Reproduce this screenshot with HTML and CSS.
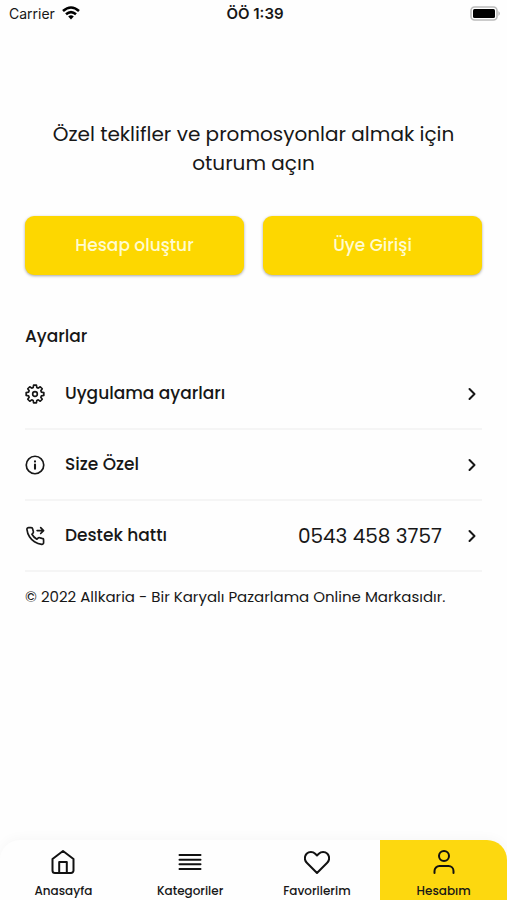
FILE: index.html
```html
<!DOCTYPE html>
<html lang="tr">
<head>
<meta charset="utf-8">
<meta name="viewport" content="width=device-width, initial-scale=1">
<title>Hesabım</title>
<link rel="stylesheet" href="styles.css">
</head>
<body>
<header class="status">
  <span class="status-carrier">Carrier
    <svg width="18" height="14" viewBox="0 0 18 14" fill="none" stroke="#000" stroke-width="2.6" aria-hidden="true"><path d="M1 5Q9-2 17 5M4 8.3Q9 4 14 8.3"/><path d="M6.2 10.4Q9 8.2 11.8 10.4L9 13.4Z" fill="#000" stroke="none"/></svg>
  </span>
  <strong class="status-time">ÖÖ 1:39</strong>
  <svg class="battery" width="31" height="15" viewBox="0 0 31 15" aria-hidden="true"><rect x="1" y="1" width="26" height="13" rx="3.5" fill="#fff" stroke="#bbb" stroke-width="1.6"/><rect x="3" y="3" width="22" height="9" rx="1.5"/><path d="M28.500 5Q31 7.500 28.500 10Z" fill="#aaa"/></svg>
</header>
<main class="account">
  <h1 class="prompt">Özel teklifler ve promosyonlar almak için oturum açın</h1>
  <div class="actions">
    <button class="action" type="button">Hesap oluştur</button>
    <button class="action" type="button">Üye Girişi</button>
  </div>
  <h2 class="section-title">Ayarlar</h2>
  <nav class="settings" aria-label="Ayarlar">
    <a class="row" href="#ayarlar">
      <svg class="row-icon" viewBox="-12 -12 24 24"><path d="M10.600 1.700 7.700 2.200 7 3.900 8.700 6.300 6.300 8.700 3.900 7 2.200 7.700 1.700 10.600H-1.700L-2.200 7.700-3.900 7-6.300 8.700-8.700 6.300-7 3.900-7.700 2.200-10.600 1.700V-1.700L-7.700-2.200-7-3.900-8.700-6.300-6.300-8.700-3.900-7-2.200-7.700-1.700-10.600H1.700L2.200-7.700 3.900-7 6.300-8.700 8.700-6.300 7-3.900 7.700-2.200 10.600-1.700Z"/><circle r="2.800"/></svg>
      <span class="row-label">Uygulama ayarları</span>
      <svg class="chevron" viewBox="0 0 12 16"><path d="M3.500 3l5 5-5 5"/></svg>
    </a>
    <a class="row" href="#size-ozel">
      <svg class="row-icon" viewBox="0 0 24 24"><circle cx="12" cy="12" r="10.500"/><path d="M12 11.500v5M12 7.500v.4" stroke-width="2.500"/></svg>
      <span class="row-label">Size Özel</span>
      <svg class="chevron" viewBox="0 0 12 16"><path d="M3.500 3l5 5-5 5"/></svg>
    </a>
    <a class="row" href="tel:05434583757">
      <svg class="row-icon" viewBox="0 0 24 24"><path d="M14.500 5.500H22M18.800 2l3.500 3.500L18.800 9M22.300 17v3a2 2 0 0 1-2.200 2 20 20 0 0 1-8.700-3.100 19.500 19.500 0 0 1-6-6A20 20 0 0 1 2.300 4.100 2 2 0 0 1 4.300 2h3a2 2 0 0 1 2 1.700c.13 1 .36 1.900.7 2.800a2 2 0 0 1-.45 2.100L8.300 9.900a16 16 0 0 0 6 6l1.300-1.300a2 2 0 0 1 2.100-.45c.9.340 1.800.57 2.800.7a2 2 0 0 1 1.800 2.150z"/></svg>
      <span class="row-label">Destek hattı</span>
      <span class="row-value">0543 458 3757</span>
      <svg class="chevron" viewBox="0 0 12 16"><path d="M3.500 3l5 5-5 5"/></svg>
    </a>
  </nav>
  <p class="copyright">© 2022 Allkaria - Bir Karyalı Pazarlama Online Markasıdır.</p>
</main>
<nav class="tabs" aria-label="Menü">
  <a class="tab" href="#anasayfa">
    <svg class="tab-icon" viewBox="0 0 26 26"><path d="M2.500 10 13 2l10.500 8v11.500a2.500 2.500 0 0 1-2.500 2.500H5a2.500 2.500 0 0 1-2.500-2.500zM9.200 24V13h7.600v11"/></svg>
    Anasayfa
  </a>
  <a class="tab" href="#kategoriler">
    <svg class="tab-icon" viewBox="0 0 26 26"><path d="M2.500 6h21M2.500 10.700h21M2.500 15.300h21M2.500 20h21"/></svg>
    Kategoriler
  </a>
  <a class="tab" href="#favorilerim">
    <svg class="tab-icon" viewBox="0 0 26 26"><path d="M13 24 2.800 13.800C.3 11.300.2 7.300 2.600 4.800 5 2.500 8.800 2.500 11.200 4.800L13 6.500l1.800-1.700c2.400-2.300 6.200-2.300 8.600 0 2.400 2.500 2.300 6.500-.2 9z"/></svg>
    Favorilerim
  </a>
  <a class="tab tab-active" href="#hesabim" aria-current="page">
    <svg class="tab-icon" viewBox="0 0 26 26"><circle cx="13" cy="7" r="5"/><path d="M3.500 24v-2a5 5 0 0 1 5-5h9a5 5 0 0 1 5 5v2"/></svg>
    Hesabım
  </a>
</nav>
</body>
</html>
```
FILE: styles.css
```css
* {
  box-sizing: border-box;
}

body {
  display: flex;
  flex-direction: column;
  min-height: 100vh;
  margin: 0;
  background: #fefefe;
  color: #171717;
  font-family: Poppins, Inter, "Open Sans", sans-serif;
}

a {
  color: inherit;
  text-decoration: none;
}

svg {
  flex: none;
}

.status {
  display: grid;
  grid-template-columns: 1fr auto 1fr;
  align-items: center;
  height: 26px;
  padding: 0 6px 0 9px;
  font-family: Inter, sans-serif;
  font-size: 14px;
}

.status-carrier {
  display: flex;
  align-items: center;
  gap: 7px;
}

.status-time {
  font-size: 15px;
  font-weight: 600;
}

.battery {
  justify-self: end;
}

.account {
  flex: 1;
  padding: 94px 25px 24px;
}

.prompt {
  max-width: 420px;
  margin: 0 auto;
  font-size: 20px;
  font-weight: 400;
  line-height: 29px;
  text-align: center;
}

.actions {
  display: grid;
  grid-template-columns: 1fr 1fr;
  gap: 19px;
  margin-top: 38px;
}

.action {
  height: 59px;
  padding: 0 0 2px;
  border: 0;
  border-radius: 9px;
  background: #fdd700;
  box-shadow: 0 1px 3px rgba(0, 0, 0, 0.35);
  color: #fffbd0;
  font-family: inherit;
  font-size: 17px;
  font-weight: 500;
}

.section-title {
  margin: 48px 0 10px;
  font-size: 17px;
  font-weight: 500;
  line-height: 26px;
}

.row {
  display: flex;
  align-items: center;
  height: 71px;
  border-bottom: 2px solid #f5f5f5;
}

.row-icon {
  width: 20px;
  height: 20px;
  margin-right: 20px;
  fill: none;
  stroke: #171717;
  stroke-width: 2;
  stroke-linecap: round;
  stroke-linejoin: round;
}

.row-label {
  flex: 1;
  padding-bottom: 2px;
  font-size: 17px;
  font-weight: 500;
}

.row-value {
  margin-right: 24px;
  font-size: 20px;
}

.chevron {
  width: 12px;
  height: 16px;
  margin-right: 4px;
  fill: none;
  stroke: #171717;
  stroke-width: 2;
  stroke-linecap: round;
  stroke-linejoin: round;
}

.copyright {
  margin: 14px 0 0;
  font-size: 15px;
  line-height: 22px;
}

.tabs {
  display: grid;
  grid-template-columns: repeat(4, 1fr);
  height: 60px;
  border-radius: 20px 20px 0 0;
  background: #fefefe;
  box-shadow: 0 -2px 12px rgba(0, 0, 0, 0.03);
  overflow: hidden;
}

.tab {
  display: flex;
  flex-direction: column;
  align-items: center;
  gap: 7px;
  padding-top: 9px;
  font-size: 12px;
  font-weight: 500;
  line-height: 18px;
}

.tab-icon {
  width: 26px;
  height: 26px;
  fill: none;
  stroke: #111;
  stroke-width: 2;
  stroke-linecap: round;
  stroke-linejoin: round;
}

.tab-active {
  background: #fdd80f;
}
```
